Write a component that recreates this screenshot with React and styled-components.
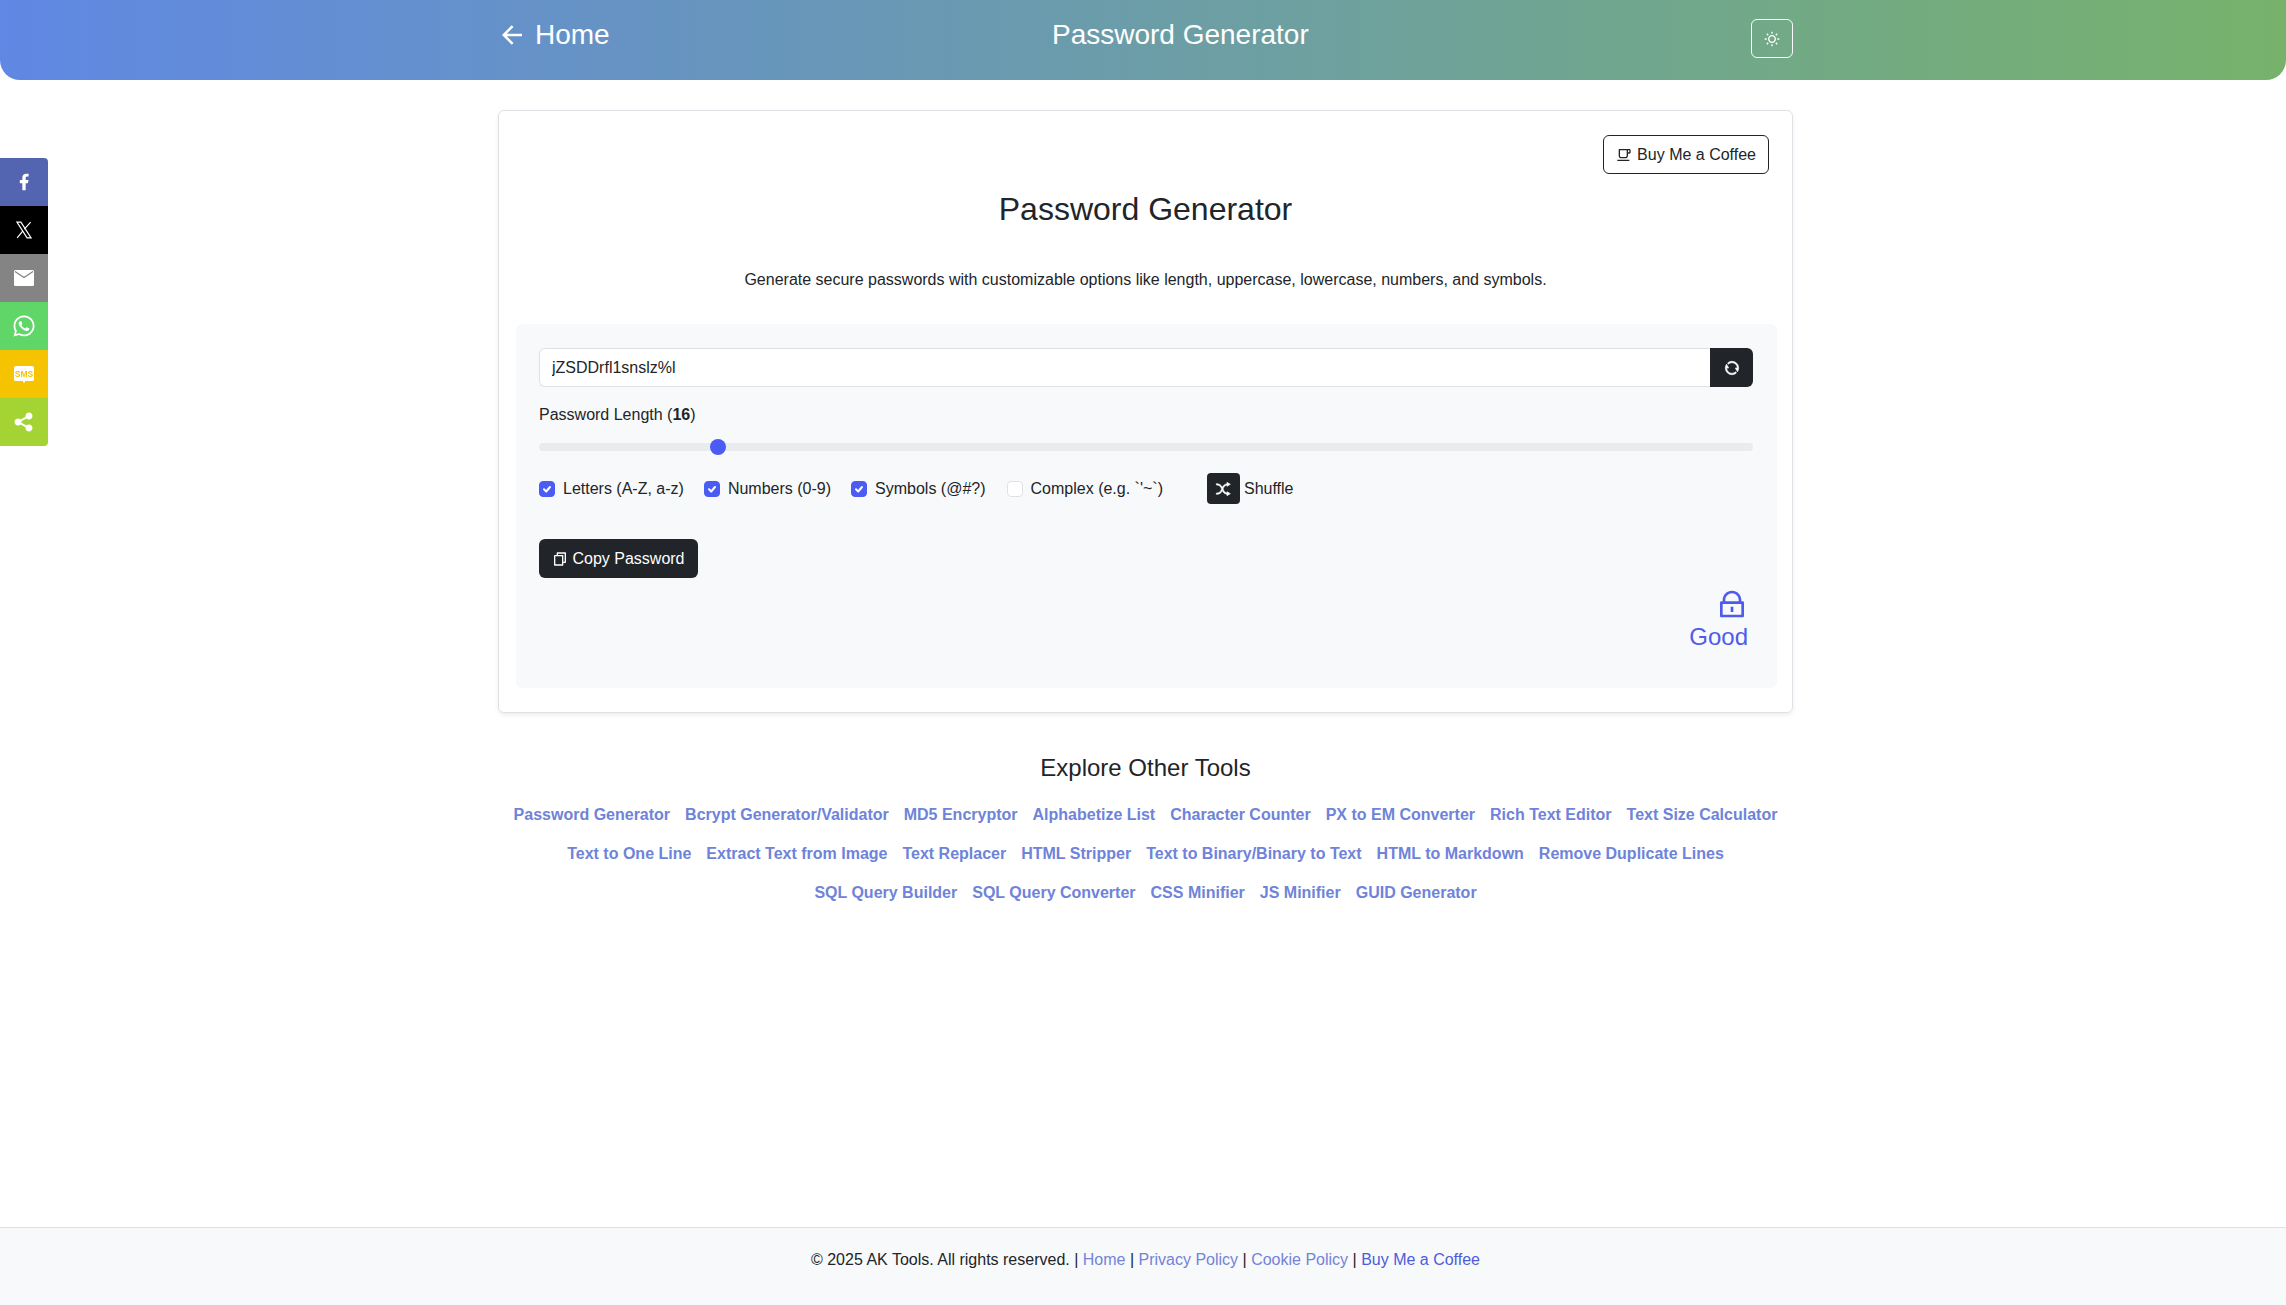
import React from "react";
import styled, { createGlobalStyle } from "styled-components";
import { RiArrowLeftLine, RiSunLine, RiCupLine, RiRefreshLine, RiShuffleLine, RiFileCopyLine, RiLockLine, RiShareFill, RiFacebookFill } from "react-icons/ri";
import { FaWhatsapp } from "react-icons/fa";

const Global = createGlobalStyle`
  html, body { margin: 0; padding: 0; background: #fff; }
  body { font-family: "Liberation Sans", Arial, sans-serif; font-size: 16px; line-height: 1.5; color: #212529; overflow-x: hidden; }
  * { box-sizing: border-box; }
`;
const Page = styled.div`
  min-height: 1305px;
  display: flex;
  flex-direction: column;
`;
const Header = styled.header`
  height: 80px;
  background: linear-gradient(90deg, #6088e4 0%, #77b26c 100%);
  border-radius: 0 0 20px 20px;
  padding: 18px 493px 0 497px;
  display: flex;
  justify-content: space-between;
  align-items: flex-start;
  color: #fff;
`;
const HomeLink = styled.a`
  display: flex;
  align-items: center;
  gap: 8px;
  font-size: 28px;
  line-height: 34px;
  color: #fff;
  text-decoration: none;
`;
const HeaderTitle = styled.div`
  font-size: 28px;
  line-height: 34px;
`;
const ThemeButton = styled.button`
  width: 42px;
  height: 39px;
  margin-top: 1px;
  background: transparent;
  border: 1px solid #fff;
  border-radius: 6px;
  color: #fff;
  display: flex;
  align-items: center;
  justify-content: center;
  padding: 0;
`;
const Main = styled.main`
  flex: 1;
  width: 1295px;
  margin: 30px 0 0 498px;
`;
const Card = styled.section`
  height: 603px;
  border: 1px solid #dee2e6;
  border-radius: 6px;
  box-shadow: 0 2px 4px rgba(0, 0, 0, 0.075);
  padding: 24px 15px 0 17px;
  display: flex;
  flex-direction: column;
`;
const CardTop = styled.div`
  display: flex;
  justify-content: flex-end;
  margin-right: 8px;
`;
const OutlineButton = styled.a`
  display: inline-flex;
  align-items: center;
  gap: 5px;
  height: 39px;
  padding: 0 12px;
  border: 1px solid #212529;
  border-radius: 6px;
  color: #212529;
  font-size: 16px;
`;
const Title = styled.h2`
  margin: 16px 2px 0 0;
  font-size: 32px;
  font-weight: 400;
  line-height: 38px;
  text-align: center;
`;
const Desc = styled.p`
  margin: 40px 2px 0 0;
  text-align: center;
  font-size: 16px;
  line-height: 24px;
`;
const Panel = styled.div`
  margin-top: 32px;
  height: 364px;
  background: #f8f9fa;
  border-radius: 6px;
  padding: 24px 24px 0 23px;
  display: flex;
  flex-direction: column;
`;
const InputRow = styled.div`
  display: flex;
  height: 39px;
`;
const PasswordInput = styled.input`
  flex: 1;
  min-width: 0;
  height: 100%;
  border: 1px solid #dee2e6;
  border-right: 0;
  border-radius: 6px 0 0 6px;
  padding: 0 12px;
  background: #fff;
  color: #212529;
  font: 16px "Liberation Sans", Arial, sans-serif;
  outline: none;
`;
const IconButton = styled.button`
  width: 43px;
  height: 100%;
  background: #212529;
  color: #fff;
  border: 0;
  border-radius: 0 6px 6px 0;
  display: flex;
  align-items: center;
  justify-content: center;
  padding: 0;
  svg { stroke: currentColor; stroke-width: 0.9; }
`;
const RangeLabel = styled.label`
  display: block;
  margin-top: 16px;
  line-height: 24px;
  b { font-weight: 700; }
`;
const Range = styled.input`
  -webkit-appearance: none;
  appearance: none;
  display: block;
  width: 100%;
  height: 16px;
  margin: 12px 0 0;
  padding: 0;
  background: transparent;
  &::-webkit-slider-runnable-track {
    height: 8px;
    border-radius: 16px;
    background: #e9ecef;
  }
  &::-webkit-slider-thumb {
    -webkit-appearance: none;
    width: 16px;
    height: 16px;
    margin-top: -4px;
    border-radius: 50%;
    background: #4b5cf5;
    border: 0;
  }
`;
const Options = styled.div`
  display: flex;
  align-items: center;
  height: 31px;
  margin-top: 18px;
`;
const Check = styled.label`
  display: flex;
  align-items: center;
  gap: 8px;
  margin-right: ${(p) => p.$gap}px;
`;
const Box = styled.span`
  width: 16px;
  height: 16px;
  border-radius: 4px;
  border: 1px solid ${(p) => (p.$on ? "#4b5cf5" : "#dee2e6")};
  background: ${(p) => (p.$on ? "#4b5cf5" : "#fff")};
  display: flex;
  align-items: center;
  justify-content: center;
`;
const ShuffleButton = styled.button`
  width: 33px;
  height: 31px;
  margin-right: 4px;
  background: #212529;
  color: #fff;
  border: 0;
  border-radius: 4px;
  display: flex;
  align-items: center;
  justify-content: center;
  padding: 0;
  svg { stroke: currentColor; stroke-width: 0.9; }
`;
const CopyButton = styled.button`
  align-self: flex-start;
  margin-top: 35px;
  height: 39px;
  width: 159px;
  background: #212529;
  color: #fff;
  border: 0;
  border-radius: 6px;
  display: flex;
  align-items: center;
  justify-content: center;
  gap: 4px;
  font: 16px "Liberation Sans", Arial, sans-serif;
  padding: 0;
`;
const Strength = styled.div`
  align-self: flex-end;
  margin: 10px 5px 0 0;
  display: flex;
  flex-direction: column;
  align-items: flex-end;
  color: #4e5bec;
  font-size: 24px;
  line-height: 29px;
  span { margin-top: 2px; }
`;
const Explore = styled.section`
  margin-top: 40px;
  text-align: center;
`;
const ExploreTitle = styled.h3`
  margin: 0;
  font-size: 24px;
  font-weight: 400;
  line-height: 29px;
`;
const LinkRows = styled.div`
  margin-top: 21px;
  display: flex;
  flex-wrap: wrap;
  justify-content: center;
  row-gap: 15px;
  column-gap: 15px;
`;
const ToolLink = styled.a`
  color: #6e83d9;
  font-weight: 700;
  font-size: 16px;
  line-height: 24px;
`;
const Footer = styled.footer`
  height: 78px;
  border-top: 1px solid #dee2e6;
  background: #f8f9fa;
  padding: 20px 0 0 5px;
  text-align: center;
  line-height: 24px;
`;
const FootLink = styled.a`
  color: ${(p) => p.$color || "#7283d8"};
`;
const ShareBar = styled.aside`
  position: fixed;
  left: 0;
  top: 158px;
  width: 48px;
  border-radius: 0 4px 4px 0;
  overflow: hidden;
`;
const ShareItem = styled.div`
  height: 48px;
  background: ${(p) => p.$bg};
  color: #fff;
  display: flex;
  align-items: center;
  justify-content: center;
`;
const BackArrow = styled(RiArrowLeftLine)`
  display: block;
`;

const tools = ["Password Generator","Bcrypt Generator/Validator","MD5 Encryptor","Alphabetize List","Character Counter","PX to EM Converter","Rich Text Editor","Text Size Calculator","Text to One Line","Extract Text from Image","Text Replacer","HTML Stripper","Text to Binary/Binary to Text","HTML to Markdown","Remove Duplicate Lines","SQL Query Builder","SQL Query Converter","CSS Minifier","JS Minifier","GUID Generator"];
const checks = [["Letters (A-Z, a-z)", true, 20],["Numbers (0-9)", true, 20],["Symbols (@#?)", true, 21],["Complex (e.g. `'~`)", false, 44]];

const Tick = () => (
  <svg width="12" height="12" viewBox="0 0 12 12" fill="none" stroke="#fff" strokeWidth="2" strokeLinecap="round" strokeLinejoin="round"><path d="M3 6.3l2.2 2.2L9 4"/></svg>
);
const XLogo = () => (
  <svg width="20" height="20" viewBox="0 0 24 24" fill="none" stroke="#fff" strokeWidth="1.400"><path d="M3.500 2.500h4.800l12.200 19h-4.800z"/><path d="M20 2.500l-7.600 8.400M10.700 13L3.800 21.500"/></svg>
);
const Mail = () => (
  <svg width="24" height="24" viewBox="0 0 24 24" fill="#fff"><path d="M3.500 4h17A1.500 1.500 0 0 1 22 5.500v13a1.500 1.500 0 0 1-1.500 1.500h-17A1.500 1.500 0 0 1 2 18.500v-13A1.500 1.500 0 0 1 3.500 4z"/><path d="M3 5.500L12 11.500l9-6" fill="none" stroke="#848484" strokeWidth="1.300"/></svg>
);
const Sms = () => (
  <svg width="24" height="24" viewBox="0 0 24 24"><path fill="#fff" d="M3.500 4h17A1.500 1.500 0 0 1 22 5.500v12a1.500 1.500 0 0 1-1.500 1.500H13.500l-1.500 2-1.500-2H3.500A1.500 1.500 0 0 1 2 17.500v-12A1.500 1.500 0 0 1 3.500 4z"/><text x="12" y="14.500" textAnchor="middle" fontSize="8.500" fontWeight="700" fontFamily="Liberation Sans, sans-serif" fill="#f5c300">SMS</text></svg>
);

export default function App() {
  return (
    <Page>
      <Global />
      <Header>
        <HomeLink><BackArrow size={30} />Home</HomeLink>
        <HeaderTitle>Password Generator</HeaderTitle>
        <ThemeButton aria-label="Theme"><RiSunLine size={16} /></ThemeButton>
      </Header>
      <ShareBar>
        <ShareItem $bg="#5365b0"><RiFacebookFill size={20} /></ShareItem>
        <ShareItem $bg="#000"><XLogo /></ShareItem>
        <ShareItem $bg="#848484"><Mail /></ShareItem>
        <ShareItem $bg="#60d669"><FaWhatsapp size={24} /></ShareItem>
        <ShareItem $bg="#f5c300"><Sms /></ShareItem>
        <ShareItem $bg="#a4d433"><RiShareFill size={24} /></ShareItem>
      </ShareBar>
      <Main>
        <Card>
          <CardTop>
            <OutlineButton><RiCupLine size={16} />Buy Me a Coffee</OutlineButton>
          </CardTop>
          <Title>Password Generator</Title>
          <Desc>Generate secure passwords with customizable options like length, uppercase, lowercase, numbers, and symbols.</Desc>
          <Panel>
            <InputRow>
              <PasswordInput readOnly value="jZSDDrfl1snslz%l" />
              <IconButton aria-label="Regenerate"><RiRefreshLine size={16} /></IconButton>
            </InputRow>
            <RangeLabel>Password Length (<b>16</b>)</RangeLabel>
            <Range type="range" min="8" max="64" defaultValue="16" />
            <Options>
              {checks.map(([t, on, gap]) => (
                <Check key={t} $gap={gap}>
                  <Box $on={on}>{on && <Tick />}</Box>
                  {t}
                </Check>
              ))}
              <ShuffleButton aria-label="Shuffle"><RiShuffleLine size={16} /></ShuffleButton>
              Shuffle
            </Options>
            <CopyButton><RiFileCopyLine size={16} />Copy Password</CopyButton>
            <Strength><RiLockLine size={32} /><span>Good</span></Strength>
          </Panel>
        </Card>
        <Explore>
          <ExploreTitle>Explore Other Tools</ExploreTitle>
          <LinkRows>
            {tools.map((t) => <ToolLink key={t}>{t}</ToolLink>)}
          </LinkRows>
        </Explore>
      </Main>
      <Footer>
        © 2025 AK Tools. All rights reserved. | <FootLink>Home</FootLink> | <FootLink>Privacy Policy</FootLink> | <FootLink>Cookie Policy</FootLink> | <FootLink $color="#4e5bdc">Buy Me a Coffee</FootLink>
      </Footer>
    </Page>
  );
}
